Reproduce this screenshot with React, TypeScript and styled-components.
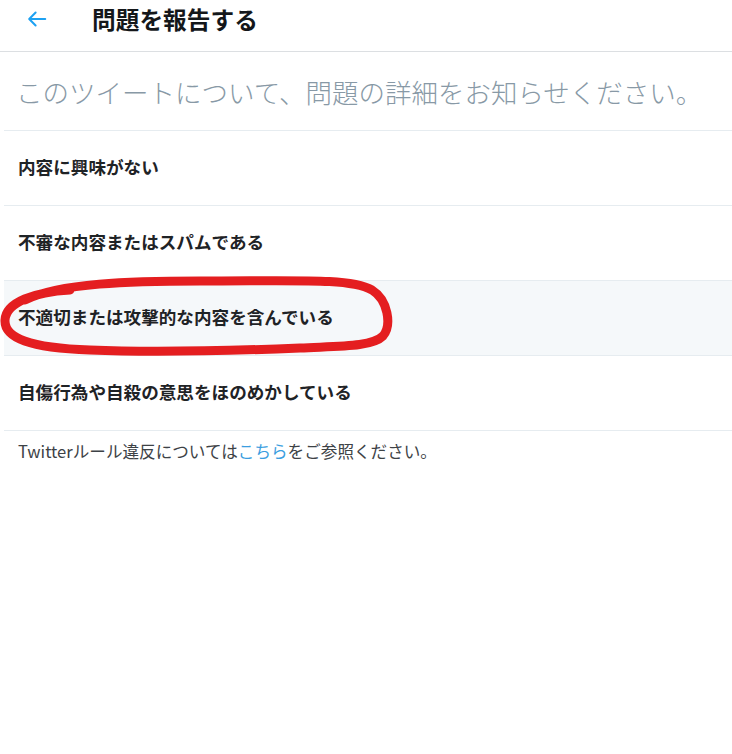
import React from "react";
import { styled, createGlobalStyle } from "styled-components";

const GlobalStyle = createGlobalStyle`
  body {
    margin: 0;
    background: #ffffff;
    font-family: "Noto Sans CJK JP", "Noto Sans", sans-serif;
  }
`;

const Page = styled.div`
  position: relative;
  width: 732px;
  min-height: 754px;
  background: #ffffff;
`;

const Header = styled.header`
  display: flex;
  align-items: center;
  height: 51px;
  border-bottom: 1px solid #dcdfe2;
`;

const BackButton = styled.button`
  display: flex;
  align-items: center;
  justify-content: center;
  width: 40px;
  height: 40px;
  margin-left: 17px;
  margin-top: -14px;
  padding: 0;
  border: none;
  background: transparent;
  color: #1da1f2;
  cursor: pointer;
`;

const Title = styled.h1`
  margin: -14px 0 0 35px;
  font-size: 23.7px;
  font-weight: 700;
  color: #14171a;
`;

const Content = styled.div`
  margin-left: 4px;
`;

const Prompt = styled.div`
  display: flex;
  align-items: center;
  height: 78px;
  padding: 0 0 0 12px;
  border-bottom: 1px solid #e6ecf0;
  font-size: 26.5px;
  font-weight: 300;
  color: #8899a6;
  white-space: nowrap;
`;

const Option = styled.div<{ $active?: boolean }>`
  display: flex;
  align-items: center;
  height: 75px;
  padding: 0 0 3px 14px;
  box-sizing: border-box;
  border-bottom: 1px solid #e6ecf0;
  background: ${({ $active }) => ($active ? "#f5f8fa" : "#ffffff")};
  font-size: 17.6px;
  font-weight: 700;
  color: #1f2326;
  cursor: pointer;
`;

const Footer = styled.p`
  margin: 0;
  padding: 8px 0 0 18px;
  font-size: 16.6px;
  line-height: 24px;
  color: #3d4246;
`;

const FooterLink = styled.a`
  color: #3b9ee0;
  text-decoration: none;
`;

const Scribble = styled.svg`
  position: absolute;
  left: 0;
  top: 270px;
  pointer-events: none;
`;

const options = [
  "内容に興味がない",
  "不審な内容またはスパムである",
  "不適切または攻撃的な内容を含んでいる",
  "自傷行為や自殺の意思をほのめかしている",
];

const App: React.FC = () => {
  return (
    <Page>
      <GlobalStyle />
      <Header>
        <BackButton aria-label="戻る">
          <svg width="22" height="22" viewBox="0 0 24 24" fill="none">
            <path
              d="M21 12H4M10.5 5L3.5 12l7 7"
              stroke="currentColor"
              strokeWidth="2.2"
              strokeLinecap="round"
              strokeLinejoin="round"
            />
          </svg>
        </BackButton>
        <Title>問題を報告する</Title>
      </Header>

      <Content>
        <Prompt>このツイートについて、問題の詳細をお知らせください。</Prompt>
        {options.map((label, i) => (
          <Option key={label} $active={i === 2}>
            {label}
          </Option>
        ))}
      </Content>

      <Footer>
        Twitterルール違反については<FooterLink href="#">こちら</FooterLink>をご参照ください。
      </Footer>

      <Scribble width="400" height="90" viewBox="0 0 400 90">
        <path
          d="M70 20 C 35 22, 6 32, 5 50 C 4 68, 30 78, 90 80 C 160 83, 250 80, 300 78 C 340 76, 372 77, 383 66 C 392 55, 388 30, 372 20 C 350 8, 300 11, 200 11 C 130 11, 60 13, 25 30"
          fill="none"
          stroke="#e41e20"
          strokeWidth="9"
          strokeLinecap="round"
          strokeLinejoin="round"
        />
      </Scribble>
    </Page>
  );
};

export default App;
